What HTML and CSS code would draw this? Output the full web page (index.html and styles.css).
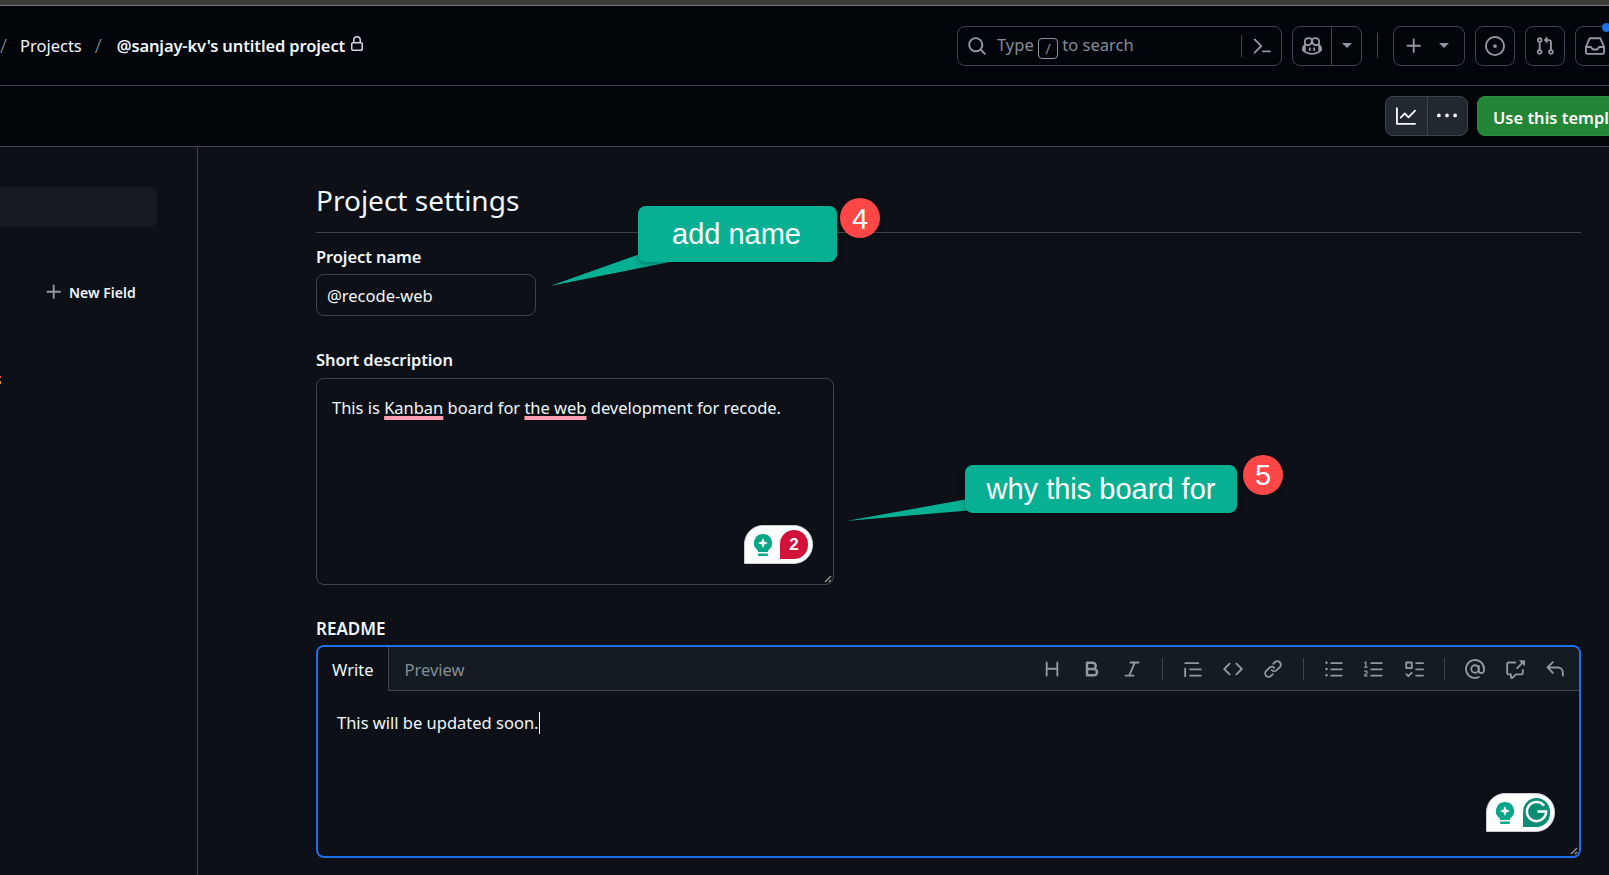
FILE: index.html
```html
<!DOCTYPE html>
<html lang="en">
    <head>
        <meta charset="UTF-8" />
        <meta name="viewport" content="width=device-width, initial-scale=1.0" />
        <title>Project settings</title>
        <link rel="stylesheet" href="styles.css">
    </head>
    <body>
        <div class="top-strip"></div>

        <header class="app-header">
            <nav class="crumbs">
                <span class="crumb-sep first">/</span>
                <a class="crumb">Projects</a>
                <span class="crumb-sep">/</span>
                <strong class="crumb-current">@sanjay-kv's untitled project</strong>
                <svg class="icon lock" viewBox="0 0 16 16"><path d="M4 4a4 4 0 0 1 8 0v2h.25c.966 0 1.75.784 1.75 1.75v5.5A1.75 1.75 0 0 1 12.25 15h-8.5A1.75 1.75 0 0 1 2 13.25v-5.5C2 6.784 2.784 6 3.75 6H4Zm8.25 3.5h-8.5a.25.25 0 0 0-.25.25v5.5c0 .138.112.25.25.25h8.5a.25.25 0 0 0 .25-.25v-5.5a.25.25 0 0 0-.25-.25ZM10.5 6V4a2.5 2.5 0 1 0-5 0v2Z"/></svg>
            </nav>
            <div class="header-tools">
                <div class="search">
                    <svg class="icon search-icon" viewBox="0 0 16 16"><path d="M10.68 11.74a6 6 0 0 1-7.922-8.982 6 6 0 0 1 8.982 7.922l3.04 3.04a.749.749 0 0 1-.326 1.275.749.749 0 0 1-.734-.215ZM11.5 7a4.499 4.499 0 1 0-8.997 0A4.499 4.499 0 0 0 11.5 7Z"/></svg>
                    <span class="search-text">Type <kbd class="slash">/</kbd> to search</span>
                    <span class="search-sep"></span>
                    <svg class="icon palette" viewBox="0 0 16 16"><path d="m6.354 8.04-4.773 4.773a.75.75 0 1 0 1.061 1.06L7.945 8.57a.75.75 0 0 0 0-1.06L2.642 2.206a.75.75 0 0 0-1.06 1.061L6.353 8.04ZM8.75 11.5a.75.75 0 0 0 0 1.5h5.5a.75.75 0 0 0 0-1.5h-5.5Z"/></svg>
                </div>
                <div class="tool-group copilot">
                    <span class="copilot-main">
                        <svg class="icon" viewBox="0 0 16 16"><path d="M7.998 15.035c-4.562 0-7.873-2.914-7.998-3.749V9.338c.085-.628.677-1.686 1.588-2.065.013-.07.024-.143.036-.218.029-.183.06-.384.126-.612-.201-.508-.254-1.084-.254-1.656 0-.87.128-1.769.693-2.484.579-.733 1.494-1.124 2.724-1.261 1.206-.134 2.262.034 2.944.765.05.053.096.108.139.165.044-.057.094-.112.143-.165.682-.731 1.738-.899 2.944-.765 1.23.137 2.145.528 2.724 1.261.566.715.693 1.614.693 2.484 0 .572-.053 1.148-.254 1.656.066.228.098.429.126.612.012.076.024.148.037.218.924.385 1.522 1.471 1.591 2.095v1.872c0 .766-3.351 3.795-8.002 3.795Zm0-1.485c2.28 0 4.584-1.11 5.002-1.433V7.862l-.023-.116c-.49.21-1.075.291-1.727.291-1.146 0-2.059-.327-2.71-.991A3.222 3.222 0 0 1 8 6.303a3.24 3.24 0 0 1-.544.743c-.65.664-1.563.991-2.71.991-.652 0-1.236-.081-1.727-.291l-.023.116v4.255c.419.323 2.722 1.433 5.002 1.433ZM6.762 2.83c-.193-.206-.637-.413-1.682-.297-1.019.113-1.479.404-1.713.7-.247.312-.369.789-.369 1.554 0 .793.129 1.171.308 1.371.162.181.519.379 1.442.379.853 0 1.339-.235 1.638-.54.315-.322.527-.827.617-1.553.117-.935-.037-1.395-.241-1.614Zm4.155-.297c-1.044-.116-1.488.091-1.681.297-.204.219-.359.679-.242 1.614.091.726.303 1.231.618 1.553.299.305.784.54 1.638.54.922 0 1.28-.198 1.442-.379.179-.2.308-.578.308-1.371 0-.765-.123-1.242-.37-1.554-.233-.296-.693-.587-1.713-.7Z"/><path d="M6.25 9.037a.75.75 0 0 1 .75.75v1.501a.75.75 0 0 1-1.5 0V9.787a.75.75 0 0 1 .75-.75Zm4.25.75v1.501a.75.75 0 0 1-1.5 0V9.787a.75.75 0 0 1 1.5 0Z"/></svg>
                    </span>
                    <span class="copilot-more"><i class="caret"></i></span>
                </div>
                <span class="tools-sep"></span>
                <div class="tool-group plus">
                    <svg class="icon" viewBox="0 0 16 16"><path d="M7.75 2a.75.75 0 0 1 .75.75V7h4.25a.75.75 0 0 1 0 1.5H8.5v4.25a.75.75 0 0 1-1.5 0V8.5H2.75a.75.75 0 0 1 0-1.5H7V2.75A.75.75 0 0 1 7.75 2Z"/></svg>
                    <i class="caret"></i>
                </div>
                <div class="tool-btn">
                    <svg class="icon" viewBox="0 0 16 16"><path d="M8 9.5a1.5 1.5 0 1 0 0-3 1.5 1.5 0 0 0 0 3Z"/><path d="M8 0a8 8 0 1 1 0 16A8 8 0 0 1 8 0ZM1.5 8a6.5 6.5 0 1 0 13 0 6.5 6.5 0 0 0-13 0Z"/></svg>
                </div>
                <div class="tool-btn">
                    <svg class="icon" viewBox="0 0 16 16"><path d="M1.5 3.25a2.25 2.25 0 1 1 3 2.122v5.256a2.251 2.251 0 1 1-1.5 0V5.372A2.25 2.25 0 0 1 1.5 3.25Zm5.677-.177L9.573.677A.25.25 0 0 1 10 .854V2.5h1A2.5 2.5 0 0 1 13.5 5v5.628a2.251 2.251 0 1 1-1.5 0V5a1 1 0 0 0-1-1h-1v1.646a.25.25 0 0 1-.427.177L7.177 3.427a.25.25 0 0 1 0-.354ZM3.75 2.5a.75.75 0 1 0 0 1.5.75.75 0 0 0 0-1.5Zm0 9.5a.75.75 0 1 0 0 1.5.75.75 0 0 0 0-1.5Zm8.25.75a.75.75 0 1 0 1.5 0 .75.75 0 0 0-1.5 0Z"/></svg>
                </div>
                <div class="tool-btn inbox">
                    <svg class="icon" viewBox="0 0 16 16"><path d="M2.8 2.06A1.75 1.75 0 0 1 4.41 1h7.18c.7 0 1.333.417 1.61 1.06l2.74 6.395c.04.093.06.194.06.295v4.5A1.75 1.75 0 0 1 14.25 15H1.75A1.75 1.75 0 0 1 0 13.25v-4.5c0-.101.02-.202.06-.295Zm1.61.44a.25.25 0 0 0-.23.152L1.887 8H4.75a.75.75 0 0 1 .6.3L6.625 10h2.75l1.275-1.7a.75.75 0 0 1 .6-.3h2.863L11.82 2.652a.25.25 0 0 0-.23-.152Zm10.09 7h-2.875l-1.275 1.7a.75.75 0 0 1-.6.3h-3.5a.75.75 0 0 1-.6-.3L4.375 9.5H1.5v3.75c0 .138.112.25.25.25h12.5a.25.25 0 0 0 .25-.25Z"/></svg>
                    <span class="unread"></span>
                </div>
            </div>
        </header>

        <div class="sub-header">
            <div class="insights">
                <span class="insights-btn">
                    <svg class="icon" viewBox="0 0 16 16"><path d="M1.5 1.75V13.5h13.75a.75.75 0 0 1 0 1.5H.75a.75.75 0 0 1-.75-.75V1.75a.75.75 0 0 1 1.5 0Zm14.28 2.53-5.25 5.25a.75.75 0 0 1-1.06 0L7 7.06 4.28 9.78a.751.751 0 0 1-1.042-.018.751.751 0 0 1-.018-1.042l3.25-3.25a.75.75 0 0 1 1.06 0L10 7.94l4.72-4.72a.751.751 0 0 1 1.042.018.751.751 0 0 1 .018 1.042Z"/></svg>
                </span>
                <span class="insights-btn">
                    <svg class="icon" viewBox="0 0 16 16"><path d="M8 9a1.5 1.5 0 1 0 0-3 1.5 1.5 0 0 0 0 3ZM1.5 9a1.5 1.5 0 1 0 0-3 1.5 1.5 0 0 0 0 3Zm13 0a1.5 1.5 0 1 0 0-3 1.5 1.5 0 0 0 0 3Z"/></svg>
                </span>
            </div>
            <button class="use-template">Use this template</button>
        </div>

        <div class="layout">
            <aside class="sidebar">
                <div class="side-active"></div>
                <div class="new-field">
                    <svg class="icon" viewBox="0 0 16 16"><path d="M7.75 2a.75.75 0 0 1 .75.75V7h4.25a.75.75 0 0 1 0 1.5H8.5v4.25a.75.75 0 0 1-1.5 0V8.5H2.75a.75.75 0 0 1 0-1.5H7V2.75A.75.75 0 0 1 7.75 2Z"/></svg>
                    <span>New Field</span>
                </div>
                <span class="side-mark"></span>
            </aside>

            <main class="settings">
                <h2 class="settings-title">Project settings</h2>

                <label class="field-label name-label">Project name</label>
                <div class="text-input">@recode-web</div>

                <label class="field-label desc-label">Short description</label>
                <div class="text-area">
                    This is <span class="flagged">Kanban</span> board for <span class="flagged">the web</span> development for recode.
                    <div class="grammarly">
                        <svg class="bulb" viewBox="0 0 20 24"><path d="M10 1a9 9 0 0 1 5 16.500V19H5v-1.500A9 9 0 0 1 10 1Z" fill="#0aa688"/><path d="M10 5l1.400 3.600L15 10l-3.600 1.400L10 15l-1.400-3.600L5 10l3.600-1.400Z" fill="#fff"/><rect x="5" y="20.500" width="10" height="2.500" rx="1" fill="#0aa688"/></svg>
                        <span class="issue-count">2</span>
                    </div>
                    <svg class="resizer" viewBox="0 0 8 8"><path d="M1 7l6-6M5 7l2-2" stroke="#9a9a9a" stroke-width="1.300"/></svg>
                </div>

                <label class="field-label readme-label">README</label>
                <div class="editor">
                    <div class="editor-bar">
                        <span class="tab tab-on">Write</span>
                        <span class="tab">Preview</span>
                        <div class="md-tools">
                            <svg class="md" viewBox="0 0 16 16"><path d="M3.750 2a.750.750 0 0 1 .750.750V7h7V2.750a.750.750 0 0 1 1.500 0v10.500a.750.750 0 0 1-1.500 0V8.500h-7v4.750a.750.750 0 0 1-1.500 0V2.750A.750.750 0 0 1 3.750 2Z"/></svg>
                            <svg class="md" viewBox="0 0 16 16"><path d="M4 2h4.500a3.501 3.501 0 0 1 2.852 5.530A3.499 3.499 0 0 1 9.500 14H4a1 1 0 0 1-1-1V3a1 1 0 0 1 1-1Zm1 7v3h4.500a1.500 1.500 0 0 0 0-3Zm3.500-2a1.500 1.500 0 0 0 0-3H5v3Z"/></svg>
                            <svg class="md" viewBox="0 0 16 16"><path d="M6 2.750A.750.750 0 0 1 6.750 2h6.500a.750.750 0 0 1 0 1.500h-2.505l-3.858 9H9.250a.750.750 0 0 1 0 1.500h-6.500a.750.750 0 0 1 0-1.500h2.505l3.858-9H6.750A.750.750 0 0 1 6 2.750Z"/></svg>
                            <span class="md-sep"></span>
                            <svg class="md" viewBox="0 0 16 16"><path d="M1.750 2.500h10.500a.750.750 0 0 1 0 1.500H1.750a.750.750 0 0 1 0-1.500Zm4 5h8.500a.750.750 0 0 1 0 1.500h-8.500a.750.750 0 0 1 0-1.500Zm0 5h8.500a.750.750 0 0 1 0 1.500h-8.500a.750.750 0 0 1 0-1.500ZM2.500 7.750v6a.750.750 0 0 1-1.500 0v-6a.750.750 0 0 1 1.500 0Z"/></svg>
                            <svg class="md" viewBox="0 0 16 16"><path d="m11.280 3.220 4.250 4.250a.750.750 0 0 1 0 1.060l-4.250 4.250a.749.749 0 0 1-1.275-.326.749.749 0 0 1 .215-.734L13.940 8l-3.720-3.720a.749.749 0 0 1 .326-1.275.749.749 0 0 1 .734.215Zm-6.560 0a.751.751 0 0 1 1.042.018.751.751 0 0 1 .018 1.042L2.060 8l3.720 3.720a.749.749 0 0 1-.326 1.275.749.749 0 0 1-.734-.215L.470 8.530a.750.750 0 0 1 0-1.060Z"/></svg>
                            <svg class="md" viewBox="0 0 16 16"><path d="m7.775 3.275 1.250-1.250a3.500 3.500 0 1 1 4.950 4.950l-2.500 2.500a3.500 3.500 0 0 1-4.950 0 .751.751 0 0 1 .018-1.042.751.751 0 0 1 1.042-.018 1.998 1.998 0 0 0 2.830 0l2.500-2.500a2.002 2.002 0 0 0-2.830-2.830l-1.250 1.250a.751.751 0 0 1-1.042-.018.751.751 0 0 1-.018-1.042Zm-4.690 9.640a1.998 1.998 0 0 0 2.830 0l1.250-1.250a.751.751 0 0 1 1.042.018.751.751 0 0 1 .018 1.042l-1.250 1.250a3.500 3.500 0 1 1-4.950-4.950l2.500-2.500a3.500 3.500 0 0 1 4.950 0 .751.751 0 0 1-.018 1.042.751.751 0 0 1-1.042.018 1.998 1.998 0 0 0-2.830 0l-2.500 2.500a1.998 1.998 0 0 0 0 2.830Z"/></svg>
                            <span class="md-sep"></span>
                            <svg class="md" viewBox="0 0 16 16"><path d="M5.750 2.500h8.500a.750.750 0 0 1 0 1.500h-8.500a.750.750 0 0 1 0-1.500Zm0 5h8.500a.750.750 0 0 1 0 1.500h-8.500a.750.750 0 0 1 0-1.500Zm0 5h8.500a.750.750 0 0 1 0 1.500h-8.500a.750.750 0 0 1 0-1.500ZM2 14a1 1 0 1 1 0-2 1 1 0 0 1 0 2Zm1-6a1 1 0 1 1-2 0 1 1 0 0 1 2 0ZM2 4a1 1 0 1 1 0-2 1 1 0 0 1 0 2Z"/></svg>
                            <svg class="md" viewBox="0 0 16 16"><path d="M5 3.250a.750.750 0 0 1 .750-.750h8.500a.750.750 0 0 1 0 1.500h-8.500A.750.750 0 0 1 5 3.250Zm0 5a.750.750 0 0 1 .750-.750h8.500a.750.750 0 0 1 0 1.500h-8.500A.750.750 0 0 1 5 8.250Zm0 5a.750.750 0 0 1 .750-.750h8.500a.750.750 0 0 1 0 1.500h-8.500a.750.750 0 0 1-.750-.750ZM.924 10.320a.500.500 0 0 1-.851-.525l.001-.001.001-.002.002-.004.007-.011c.097-.144.215-.273.348-.384.228-.190.588-.392 1.068-.392.468 0 .858.181 1.126.484.259.294.377.673.377 1.038 0 .987-.686 1.495-1.156 1.845l-.047.035c-.303.225-.522.400-.654.597h1.357a.500.500 0 0 1 0 1H.500a.500.500 0 0 1-.500-.500c0-1.005.692-1.520 1.167-1.875l.035-.025c.531-.396.800-.625.800-1.078a.570.570 0 0 0-.128-.376C1.806 10.068 1.695 10 1.500 10a.658.658 0 0 0-.429.163.835.835 0 0 0-.144.153ZM2.003 2.500V6h.503a.500.500 0 0 1 0 1H.500a.500.500 0 0 1 0-1h.503V3.308l-.280.140a.500.500 0 0 1-.446-.895l1.003-.500a.500.500 0 0 1 .723.447Z"/></svg>
                            <svg class="md" viewBox="0 0 16 16"><path d="M2 2h4a1 1 0 0 1 1 1v4a1 1 0 0 1-1 1H2a1 1 0 0 1-1-1V3a1 1 0 0 1 1-1Zm4.655 8.595a.750.750 0 0 1 0 1.060L4.030 14.280a.750.750 0 0 1-1.060 0l-1.500-1.500a.749.749 0 0 1 .326-1.275.749.749 0 0 1 .734.215l.970.970 2.095-2.095a.750.750 0 0 1 1.060 0ZM9.750 2.500h5.500a.750.750 0 0 1 0 1.500h-5.500a.750.750 0 0 1 0-1.500Zm0 5h5.500a.750.750 0 0 1 0 1.500h-5.500a.750.750 0 0 1 0-1.500Zm0 5h5.500a.750.750 0 0 1 0 1.500h-5.500a.750.750 0 0 1 0-1.500Zm-7.250-9v3h3v-3Z"/></svg>
                            <span class="md-sep"></span>
                            <svg class="md mention" viewBox="0 0 16 16"><circle cx="8" cy="8" r="3"/><path d="M11 5v4.200a2.100 2.100 0 0 0 4.200 0V8a7.200 7.200 0 1 0-3.600 6.200"/></svg>
                            <svg class="md" viewBox="0 0 16 16"><path d="M2.750 3.500c-.138 0-.250.112-.250.250v7.500c0 .138.112.250.250.250h2a.750.750 0 0 1 .750.750v2.190l2.720-2.720a.749.749 0 0 1 .530-.220h4.500a.250.250 0 0 0 .250-.250v-2.500a.750.750 0 0 1 1.500 0v2.500A1.750 1.750 0 0 1 13.250 13H9.060l-2.573 2.573A1.458 1.458 0 0 1 4 14.543V13H2.750A1.750 1.750 0 0 1 1 11.250v-7.500C1 2.784 1.784 2 2.750 2h5.500a.750.750 0 0 1 0 1.500ZM16 1.250v4.146a.250.250 0 0 1-.427.177L14.030 4.030l-3.750 3.750a.749.749 0 0 1-1.275-.326.749.749 0 0 1 .215-.734l3.750-3.750-1.543-1.543A.250.250 0 0 1 11.604 1h4.146a.250.250 0 0 1 .250.250Z"/></svg>
                            <svg class="md" viewBox="0 0 16 16"><path d="M6.780 1.970a.750.750 0 0 1 0 1.060L3.810 6h6.440A4.750 4.750 0 0 1 15 10.750v2.500a.750.750 0 0 1-1.500 0v-2.500a3.250 3.250 0 0 0-3.250-3.250H3.810l2.970 2.970a.749.749 0 0 1-.326 1.275.749.749 0 0 1-.734-.215L1.470 7.280a.750.750 0 0 1 0-1.060l4.250-4.250a.750.750 0 0 1 1.060 0Z"/></svg>
                        </div>
                    </div>
                    <div class="editor-body">
                        <span>This will be updated soon.</span><span class="text-caret"></span>
                        <div class="grammarly readme-badge">
                            <svg class="bulb" viewBox="0 0 20 24"><path d="M10 1a9 9 0 0 1 5 16.500V19H5v-1.500A9 9 0 0 1 10 1Z" fill="#0aa688"/><path d="M10 5l1.400 3.600L15 10l-3.600 1.400L10 15l-1.400-3.600L5 10l3.600-1.400Z" fill="#fff"/><rect x="5" y="20.500" width="10" height="2.500" rx="1" fill="#0aa688"/></svg>
                            <span class="g-logo">
                                <svg viewBox="0 0 24 24"><path d="M20 6A10 10 0 1 0 22 12H13" fill="none" stroke="#fff" stroke-width="2.600"/></svg>
                            </span>
                        </div>
                        <svg class="resizer" viewBox="0 0 8 8"><path d="M1 7l6-6M5 7l2-2" stroke="#9a9a9a" stroke-width="1.300"/></svg>
                    </div>
                </div>
            </main>
        </div>

        <!-- annotations drawn on top of the screenshot -->
        <svg class="tail tail-name" viewBox="0 0 130 40"><path d="M0 38L90 6l30 8Z" fill="#07b092"/></svg>
        <div class="callout callout-name">add name</div>
        <div class="step step-name">4</div>

        <svg class="tail tail-why" viewBox="0 0 130 30"><path d="M0 28L122 6l6 11Z" fill="#07b092"/></svg>
        <div class="callout callout-why">why this board for</div>
        <div class="step step-why">5</div>
    </body>
</html>
```

FILE: styles.css
```css
* {
    margin: 0;
    box-sizing: border-box;
}

html,
body {
    height: 875px;
    overflow: hidden;
}

body {
    position: relative;
    display: flex;
    flex-direction: column;
    background-color: #0d1117;
    color: #f0f6fc;
    font-family: "Noto Sans", "Open Sans", sans-serif;
    font-size: 16.5px;
}

.icon {
    display: block;
    width: 20px;
    height: 20px;
    fill: currentColor;
    flex-shrink: 0;
}

.top-strip {
    height: 6px;
    background-color: #3c3c3c;
    border-bottom: 1px solid #777;
}

/* header */
.app-header {
    display: flex;
    align-items: center;
    justify-content: space-between;
    height: 80px;
    background-color: #010409;
    border-bottom: 1px solid #3d444d;
}

.crumbs {
    display: flex;
    align-items: center;
    font-size: 16.5px;
}

.crumb-sep {
    margin: 0 15px 0 13px;
    color: #8b949e;
    font-size: 20px;
    font-weight: 300;
}

.crumb-sep.first {
    margin: 0 13px 0 0;
}

.crumb {
    color: #f0f6fc;
}

.crumb-current {
    font-weight: 600;
    letter-spacing: -0.12px;
}

.lock {
    width: 16px;
    height: 16px;
    margin: -4px 0 0 4px;
    color: #d1d7e0;
}

.header-tools {
    display: flex;
    align-items: center;
    color: #9198a1;
}

.search {
    display: flex;
    align-items: center;
    width: 325px;
    height: 40px;
    margin-right: 10px;
    padding: 0 11px 0 9px;
    border: 1px solid #3d444d;
    border-radius: 8px;
}

.search-icon {
    margin-right: 10px;
}

.search-text {
    flex: 1;
    padding-top: 1px;
    color: #848d97;
}

.slash {
    display: inline-block;
    width: 20px;
    height: 21px;
    border: 1px solid #8b949e;
    border-radius: 4px;
    font: 14px/19px "Noto Sans", sans-serif;
    text-align: center;
    vertical-align: -3px;
}

.search-sep {
    width: 1px;
    height: 22px;
    margin-right: 10px;
    background-color: #3d444d;
}

.palette {
    margin-right: -2px;
}

.tool-group,
.tool-btn {
    display: flex;
    align-items: center;
    height: 40px;
    border: 1px solid #3d444d;
    border-radius: 8px;
}

.copilot {
    width: 70px;
}

.copilot-main {
    display: flex;
    align-items: center;
    justify-content: center;
    width: 39px;
    height: 100%;
    border-right: 1px solid #3d444d;
}

.copilot-more {
    display: flex;
    flex: 1;
    justify-content: center;
}

.caret {
    width: 0;
    height: 0;
    border-top: 5px solid currentColor;
    border-left: 5px solid transparent;
    border-right: 5px solid transparent;
}

.tools-sep {
    width: 1px;
    height: 25px;
    margin: 0 15px;
    background-color: #3d444d;
}

.plus {
    justify-content: space-between;
    width: 72px;
    margin-right: 10px;
    padding: 0 15px 0 10px;
}

.tool-btn {
    justify-content: center;
    width: 40px;
    margin-right: 10px;
}

.tool-btn.inbox {
    position: relative;
    margin-right: -6px;
}

.unread {
    position: absolute;
    top: -4px;
    right: 3px;
    width: 9px;
    height: 9px;
    border-radius: 50%;
    background-color: #1f6feb;
}

/* sub header */
.sub-header {
    display: flex;
    align-items: center;
    justify-content: flex-end;
    gap: 9px;
    height: 61px;
    margin-right: -50px;
    background-color: #010409;
    border-bottom: 1px solid #3d444d;
}

.insights {
    display: flex;
    height: 40px;
    background-color: #212830;
    border: 1px solid #3d444d;
    border-radius: 8px;
}

.insights-btn {
    display: flex;
    align-items: center;
    justify-content: center;
    width: 41px;
    padding-right: 2px;
    color: #f0f6fc;
}

.insights-btn + .insights-btn {
    width: 40px;
    border-left: 1px solid #3d444d;
}

.use-template {
    width: 182px;
    height: 40px;
    padding: 2px 0 0 15px;
    background-color: #238636;
    border: 1px solid #2e8c43;
    border-radius: 8px;
    color: #fff;
    font: 600 16.5px "Noto Sans", sans-serif;
    text-align: left;
}

/* main area */
.layout {
    display: flex;
    flex: 1;
    min-height: 0;
}

.sidebar {
    position: relative;
    width: 198px;
    padding-top: 40px;
    border-right: 1px solid #3d444d;
}

.side-active {
    width: 157px;
    height: 40px;
    background-color: #161b22;
    border-radius: 0 8px 8px 0;
}

.new-field {
    display: flex;
    align-items: center;
    gap: 5px;
    margin: 55px 0 0 44px;
    color: #f0f6fc;
    font-size: 14px;
    font-weight: 600;
}

.new-field .icon {
    color: #9198a1;
}

.side-mark {
    position: absolute;
    left: 0;
    top: 229px;
    width: 1px;
    height: 8px;
    background: linear-gradient(#e5534b 0 2px, transparent 2px 5px, #d29922 5px);
}

.settings {
    flex: 1;
    padding: 30px 28px 0 118px;
}

.settings-title {
    height: 56px;
    border-bottom: 1px solid #3d444d;
    font-size: 28px;
    font-weight: 400;
    line-height: 46px;
}

.field-label {
    display: block;
    font-size: 16.5px;
    font-weight: 600;
    letter-spacing: -0.1px;
    line-height: 24px;
}

.name-label {
    margin-top: 12px;
}

.desc-label {
    margin-top: 32px;
}

.readme-label {
    margin-top: 32px;
    font-size: 17px;
    letter-spacing: 0;
}

.text-input {
    width: 220px;
    height: 42px;
    margin-top: 5px;
    padding: 0 10px;
    border: 1px solid #3d444d;
    border-radius: 8px;
    line-height: 42px;
}

.text-area {
    position: relative;
    width: 518px;
    height: 207px;
    margin-top: 6px;
    padding: 17px 14px 17px 15px;
    border: 1px solid #3d444d;
    border-radius: 8px;
    letter-spacing: -0.02px;
    line-height: 23px;
}

.flagged {
    text-decoration: underline 4px #ff9db2;
    text-decoration-skip-ink: none;
    text-underline-offset: 2px;
}

.grammarly {
    position: absolute;
    right: 20px;
    bottom: 20px;
    display: flex;
    align-items: center;
    gap: 7px;
    width: 69px;
    height: 39px;
    padding: 0 4px 0 8px;
    background-color: #fff;
    border: 1px solid #c9ccd6;
    border-radius: 19px 19px 19px 0;
}

.bulb {
    width: 20px;
    height: 24px;
    flex-shrink: 0;
}

.issue-count {
    width: 29px;
    height: 29px;
    background-color: #d3123a;
    border-radius: 14px 14px 14px 0;
    color: #fff;
    font: 700 17px/29px "Liberation Sans", sans-serif;
    text-align: center;
}

.resizer {
    position: absolute;
    right: 1px;
    bottom: 1px;
    width: 8px;
    height: 8px;
}

.editor {
    height: 213px;
    margin-top: 4px;
    border: 2px solid #1f6feb;
    border-radius: 8px;
    overflow: hidden;
}

.editor-bar {
    display: flex;
    align-items: stretch;
    height: 44px;
    background-color: #151b23;
    border-bottom: 1px solid #3d444d;
}

.tab {
    padding: 0 16px;
    color: #848d97;
    line-height: 46px;
}

.tab-on {
    margin-bottom: -1px;
    padding: 0 14px 0 14px;
    background-color: #0d1117;
    border-right: 1px solid #3d444d;
    border-radius: 6px 0 0 0;
    color: #f0f6fc;
}

.md-tools {
    display: flex;
    align-items: center;
    gap: 20px;
    margin-left: auto;
    padding-right: 14px;
    color: #9198a1;
}

.md {
    width: 20px;
    height: 20px;
    fill: currentColor;
}

.md.mention {
    fill: none;
    stroke: currentColor;
    stroke-width: 1.5;
}

.md-sep {
    width: 1px;
    height: 22px;
    background-color: #3d444d;
}

.editor-body {
    position: relative;
    height: 165px;
    padding: 19px 0 0 19px;
    line-height: 26px;
}

.text-caret {
    display: inline-block;
    width: 1px;
    height: 22px;
    background-color: #f0f6fc;
    vertical-align: -5px;
}

.readme-badge {
    right: 24px;
    bottom: 24px;
    gap: 8px;
}

.g-logo {
    width: 29px;
    height: 29px;
    padding: 2px;
    background-color: #0b8d73;
    border-radius: 15px 15px 15px 0;
}

.g-logo svg {
    display: block;
}

/* annotations */
.callout {
    position: absolute;
    display: flex;
    align-items: center;
    justify-content: center;
    padding: 1px 0 0 0;
    background-color: #07b092;
    border-radius: 8px;
    color: #fff;
    font-family: "Liberation Sans", sans-serif;
    box-shadow: 0 2px 6px rgba(0, 0, 0, 0.3);
}

.callout-name {
    left: 638px;
    top: 206px;
    width: 199px;
    height: 56px;
    padding-right: 2px;
    font-size: 29px;
}

.callout-why {
    left: 965px;
    top: 465px;
    width: 272px;
    height: 48px;
    font-size: 29px;
}

.tail {
    position: absolute;
}

.tail-name {
    left: 550px;
    top: 248px;
    width: 130px;
    height: 40px;
}

.tail-why {
    left: 846px;
    top: 493px;
    width: 130px;
    height: 30px;
}

.step {
    position: absolute;
    width: 40px;
    height: 40px;
    background-color: #fd4747;
    border-radius: 50%;
    color: #fff;
    font: 29px/40px "Liberation Sans", sans-serif;
    text-align: center;
    box-shadow: 0 2px 5px rgba(0, 0, 0, 0.3);
}

.step-name {
    left: 840px;
    top: 198px;
    line-height: 42px;
}

.step-why {
    left: 1243px;
    top: 455px;
}
```
